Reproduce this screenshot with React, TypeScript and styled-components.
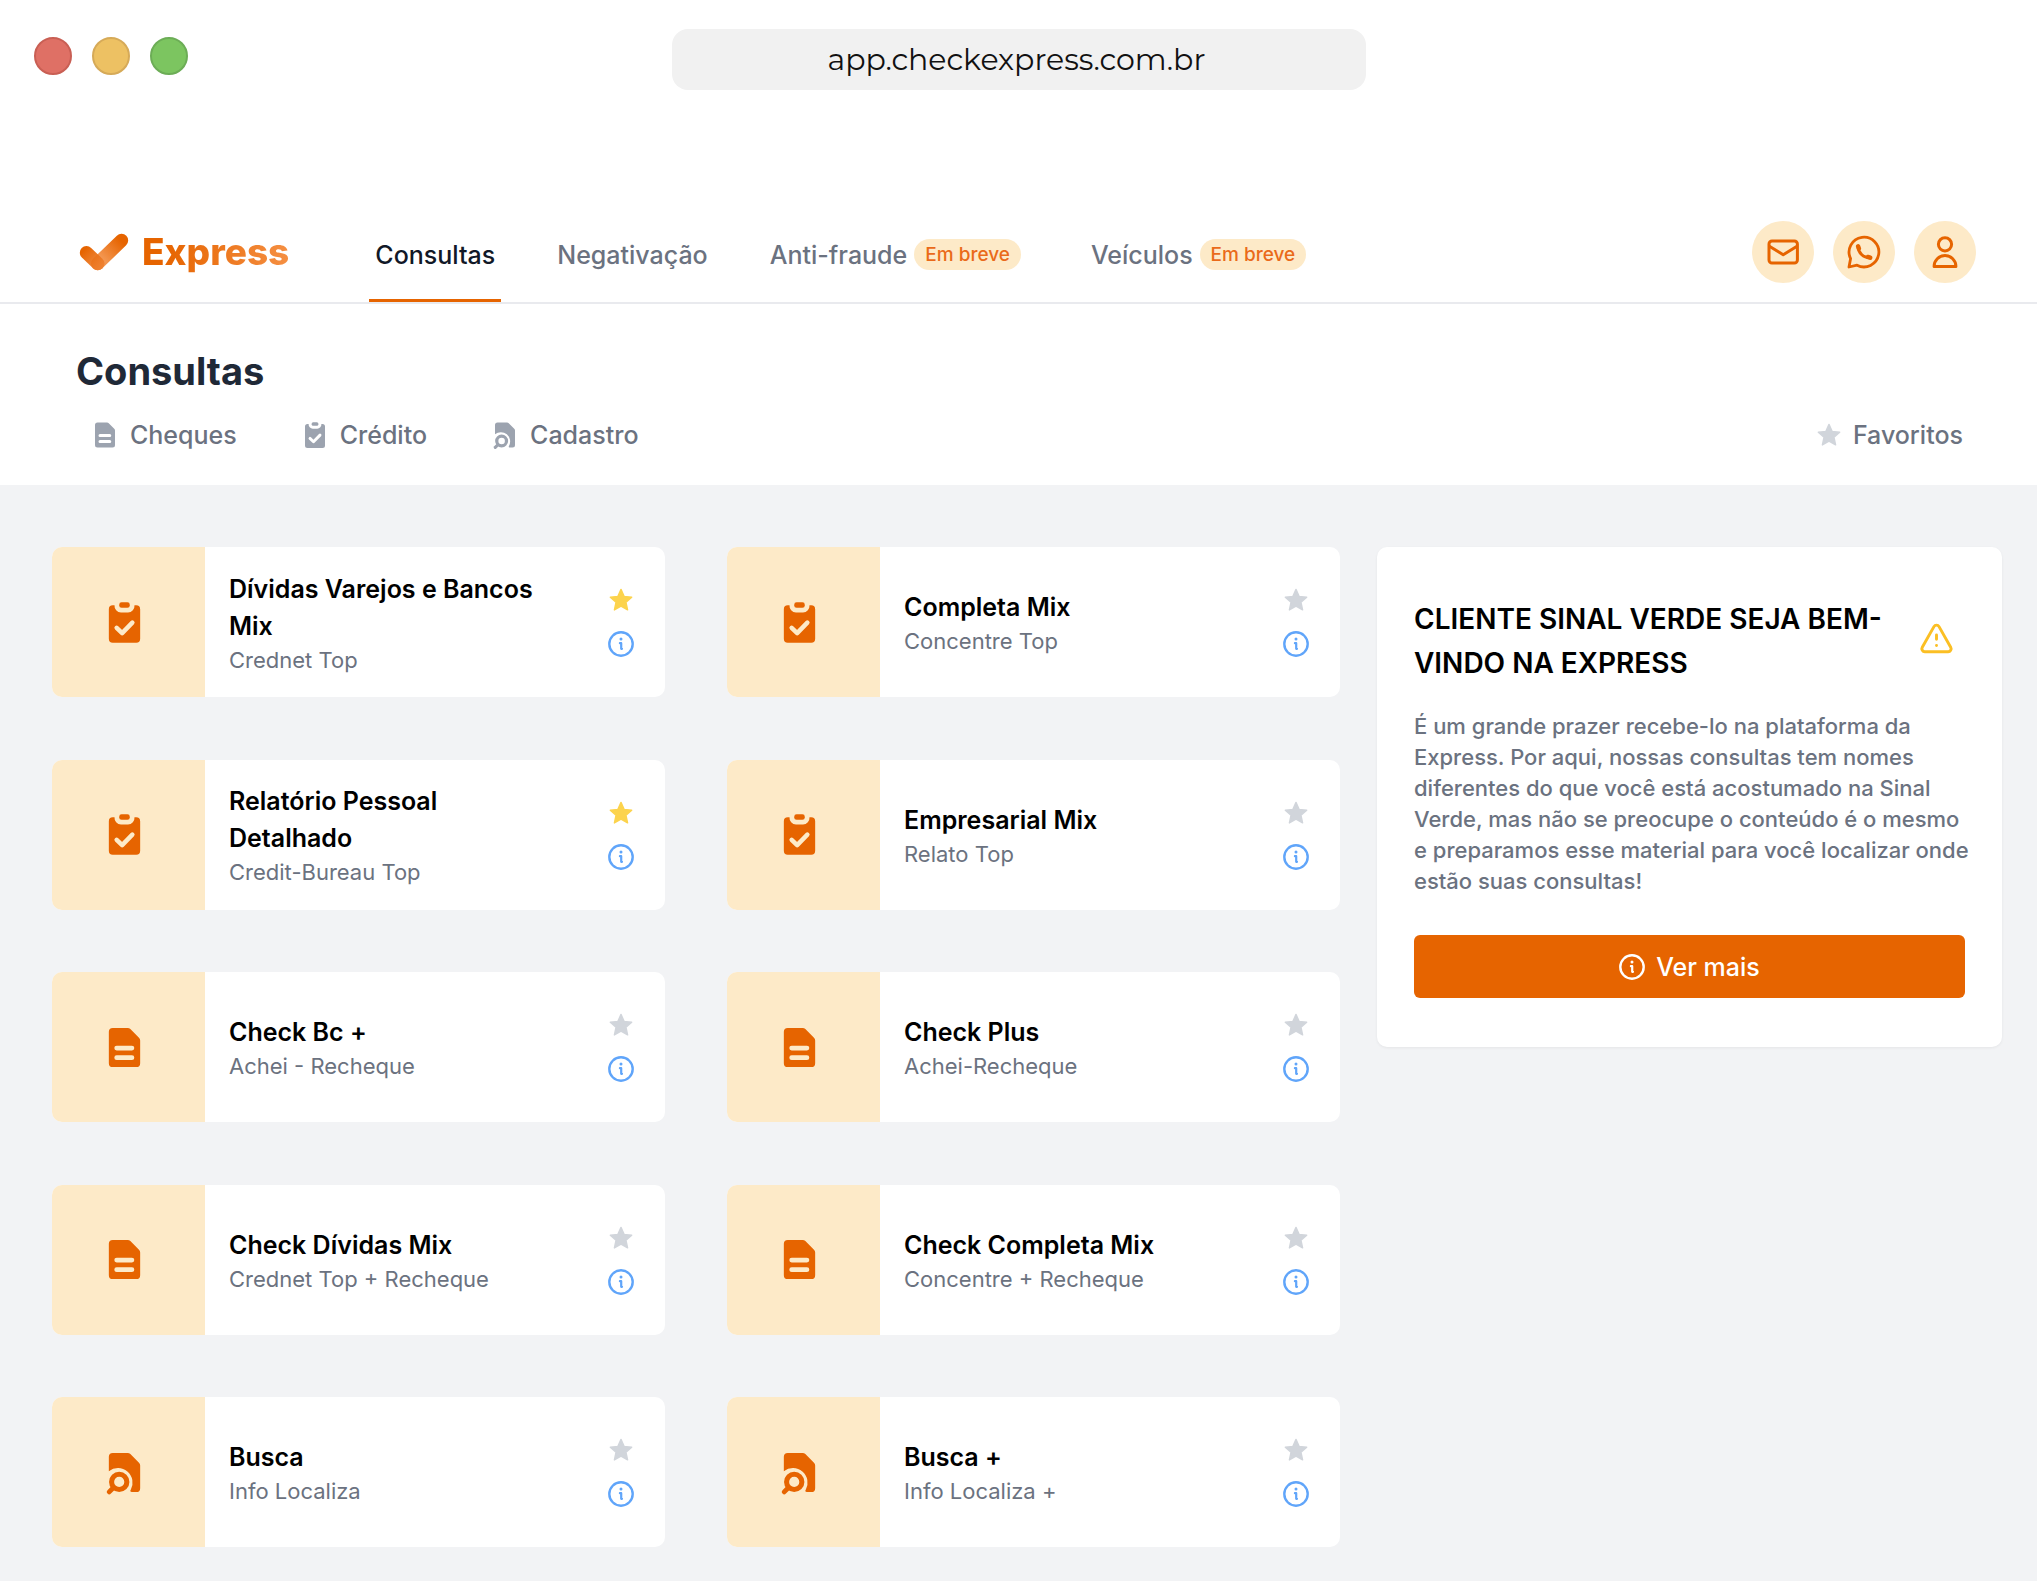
import React from "react";
import styled, { createGlobalStyle } from "styled-components";

const color = {
  brand: "#e66400",
  brandSoft: "#fdeac8",
  ink: "#000000",
  heading: "#1f2937",
  muted: "#6b7280",
  iconMuted: "#9ca3af",
  starOff: "#d1d5db",
  starOn: "#fcd34d",
  info: "#60a5fa",
  warning: "#fbbf24",
  canvas: "#f2f3f5",
  line: "#e9eaee",
  white: "#ffffff",
};

const GlobalStyle = createGlobalStyle`
  *, *::before, *::after { box-sizing: border-box; }
  body {
    margin: 0;
    background: ${color.white};
    font-family: Inter, "Liberation Sans", sans-serif;
  }
  h1, h2, h3, p { margin: 0; }
  a { color: inherit; text-decoration: none; }
  button {
    border: 0;
    padding: 0;
    background: none;
    font: inherit;
    color: inherit;
    cursor: pointer;
  }
  svg { display: block; flex-shrink: 0; }
`;

const Page = styled.div`
  min-height: 100vh;
  display: flex;
  flex-direction: column;
`;

/* Browser frame */

const Chrome = styled.div`
  display: grid;
  grid-template-columns: 1fr minmax(0, 694px) 1fr;
  align-items: start;
  padding: 29px 34px 112px;
`;

const Lights = styled.div`
  display: flex;
  gap: 20px;
  padding-top: 8px;
`;

const Light = styled.span<{ $fill: string; $edge: string }>`
  width: 38px;
  height: 38px;
  border-radius: 50%;
  background: ${(p) => p.$fill};
  border: 2px solid ${(p) => p.$edge};
`;

const AddressBar = styled.input`
  width: 100%;
  height: 61px;
  padding: 0 4px 0 0;
  border: 0;
  border-radius: 16px;
  background: #f1f1f1;
  color: #111111;
  font-family: Montserrat, Inter, sans-serif;
  font-size: 30px;
  text-align: center;
`;

/* Top navigation */

const Header = styled.header`
  display: flex;
  align-items: stretch;
  height: 102px;
  padding: 0 61px 0 78px;
  border-bottom: 2px solid ${color.line};
`;

const Logo = styled.a`
  display: flex;
  align-items: center;
  gap: 12px;
  margin-right: 80px;
`;

const LogoText = styled.span`
  font-size: 37px;
  line-height: 48px;
  font-weight: 800;
  color: transparent;
  background: linear-gradient(90deg, ${color.brand} 15%, #f58f42);
  background-clip: text;
  -webkit-background-clip: text;
`;

const Nav = styled.nav`
  display: flex;
  gap: 50px;
  flex: 1;
`;

const NavLink = styled.a<{ $active?: boolean }>`
  display: flex;
  align-items: center;
  gap: 7px;
  padding: 8px 6px 0;
  border-bottom: 3px solid ${(p) => (p.$active ? color.brand : "transparent")};
  color: ${(p) => (p.$active ? "#111827" : color.muted)};
  font-size: 25px;
  line-height: 38px;
  font-weight: 500;
`;

const Badge = styled.span`
  padding: 0 11px;
  margin-right: 8px;
  border-radius: 16px;
  background: ${color.brandSoft};
  color: #ea6a1a;
  font-size: 19px;
  line-height: 31px;
`;

const HeaderActions = styled.div`
  display: flex;
  align-items: center;
  gap: 19px;
`;

const RoundButton = styled.button`
  display: grid;
  place-items: center;
  width: 62px;
  height: 62px;
  border-radius: 50%;
  background: ${color.brandSoft};
  color: ${color.brand};
`;

/* Section header */

const SectionHead = styled.section`
  padding: 43px 74px 35px 76px;
`;

const PageTitle = styled.h1`
  color: ${color.heading};
  font-size: 38px;
  line-height: 48px;
  font-weight: 700;
`;

const Tabs = styled.div`
  display: flex;
  gap: 63px;
  margin-top: 25px;
  padding-left: 14px;
`;

const Tab = styled.button`
  display: flex;
  align-items: center;
  gap: 10px;
  color: ${color.muted};
  font-size: 25px;
  line-height: 30px;
  font-weight: 500;

  svg { color: ${color.iconMuted}; }
`;

const FavoritesTab = styled(Tab)`
  gap: 12px;
  margin-left: auto;

  svg { color: ${color.starOff}; }
`;

/* Content */

const Content = styled.main`
  flex: 1;
  display: grid;
  grid-template-columns: minmax(0, 1fr) 625px;
  gap: 37px;
  padding: 62px 35px 34px 52px;
  background: ${color.canvas};
`;

const Cards = styled.div`
  display: grid;
  grid-template-columns: repeat(2, minmax(0, 1fr));
  column-gap: 62px;
  row-gap: 48px;
  align-content: space-between;
`;

const Card = styled.article`
  display: flex;
  min-height: 150px;
  padding-right: 31px;
  border-radius: 10px;
  overflow: hidden;
  background: ${color.white};
`;

const CardIcon = styled.div`
  display: grid;
  place-items: center;
  width: 153px;
  padding-right: 8px;
  background: ${color.brandSoft};
  color: ${color.brand};
`;

const CardText = styled.div`
  flex: 1;
  align-self: center;
  padding: 2px 44px 0 24px;
`;

const CardTitle = styled.h2`
  color: ${color.ink};
  font-size: 25px;
  line-height: 37px;
  font-weight: 600;
`;

const CardSubtitle = styled.p`
  color: ${color.muted};
  font-size: 22px;
  line-height: 31px;
`;

const CardActions = styled.div`
  display: flex;
  flex-direction: column;
  justify-content: center;
  gap: 18px;
`;

const IconButton = styled.button<{ $tone: string }>`
  display: grid;
  place-items: center;
  width: 26px;
  height: 26px;
  color: ${(p) => p.$tone};
`;

const Notice = styled.aside`
  align-self: start;
  padding: 50px 37px 49px;
  border-radius: 10px;
  background: ${color.white};
  box-shadow: 0 1px 3px rgba(0, 0, 0, 0.06);
`;

const NoticeHead = styled.div`
  display: flex;
  align-items: center;
  justify-content: space-between;
  gap: 24px;
  padding-right: 11px;
  color: ${color.warning};
`;

const NoticeTitle = styled.h2`
  color: ${color.ink};
  font-size: 28px;
  line-height: 44px;
  font-weight: 600;
`;

const NoticeText = styled.p`
  margin: 26px -8px 38px 0;
  color: ${color.muted};
  font-size: 22px;
  line-height: 31px;
  font-weight: 500;
`;

const PrimaryButton = styled.button`
  display: flex;
  align-items: center;
  justify-content: center;
  gap: 11px;
  width: 100%;
  height: 63px;
  border-radius: 6px;
  background: ${color.brand};
  color: ${color.white};
  font-size: 25px;
  font-weight: 500;
`;

/* Icons */

type IconProps = { size: number; hole?: string };

const FileIcon = ({ size, hole = color.white }: IconProps) => (
  <svg width={size} height={size} viewBox="0 0 24 24" aria-hidden="true">
    <path
      fill="currentColor"
      d="M6 2h7.6a2 2 0 0 1 1.4.6l4.4 4.4a2 2 0 0 1 .6 1.4V20a2 2 0 0 1-2 2H6a2 2 0 0 1-2-2V4a2 2 0 0 1 2-2z"
    />
    <path stroke={hole} strokeWidth="2.4" strokeLinecap="round" d="M8 12.3h7.8M8 17.2h7.8" />
  </svg>
);

const ClipboardIcon = ({ size, hole = color.white }: IconProps) => (
  <svg width={size} height={size} viewBox="0 0 24 24" aria-hidden="true">
    <rect x="9.3" y="1.7" width="5.4" height="2.8" rx="1.2" fill="currentColor" />
    <path
      fill="currentColor"
      d="M6 3.2h.9a3.4 3.4 0 0 0 3.3 3.7h3.6a3.4 3.4 0 0 0 3.3-3.7h.9a2 2 0 0 1 2 2V20.3a2 2 0 0 1-2 2H6a2 2 0 0 1-2-2V5.2a2 2 0 0 1 2-2z"
    />
    <path
      fill="none"
      stroke={hole}
      strokeWidth="2.3"
      strokeLinecap="round"
      strokeLinejoin="round"
      d="M8 14.7l2.8 2.7 5.2-5.3"
    />
  </svg>
);

const FileSearchIcon = ({ size }: IconProps) => (
  <svg width={size} height={size} viewBox="0 0 24 24" aria-hidden="true" overflow="visible">
    <path
      fill="currentColor"
      d="M6 2h7.6a2 2 0 0 1 1.4.6l4.4 4.4a2 2 0 0 1 .6 1.4V20a2 2 0 0 1-2 2h-2.200c-.9 0-1-.7-.6-1.200A7.500 7.500 0 0 0 4 11.300V4a2 2 0 0 1 2-2z"
    />
    <g fill="none" stroke="currentColor" strokeLinecap="round">
      <circle cx="9.3" cy="16.8" r="3.9" strokeWidth="2.6" />
      <path strokeWidth="2.5" d="M6.300 19.800l-2.100 2.100" />
    </g>
  </svg>
);

const StarIcon = ({ size }: IconProps) => (
  <svg width={size} height={size} viewBox="0 0 24 24" aria-hidden="true">
    <path
      fill="currentColor"
      stroke="currentColor"
      strokeWidth="1.4"
      strokeLinejoin="round"
      d="M12 1.400l3.100 7 7.600.800-5.700 5.100 1.600 7.600L12 18.100l-6.600 3.800L7 14.300 1.300 9.200l7.600-.800z"
    />
  </svg>
);

const InfoIcon = ({ size }: IconProps) => (
  <svg width={size} height={size} viewBox="0 0 26 26" fill="none" aria-hidden="true">
    <circle cx="13" cy="13" r="11.7" stroke="currentColor" strokeWidth="2.4" />
    <circle cx="13" cy="8" r="1.500" fill="currentColor" />
    <path
      stroke="currentColor"
      strokeWidth="2.2"
      strokeLinecap="round"
      strokeLinejoin="round"
      d="M11.900 12.200h1.300v5.600h.8"
    />
  </svg>
);

const WarningIcon = () => (
  <svg
    width="35"
    height="35"
    viewBox="0 2 24 24"
    overflow="visible"
    fill="none"
    stroke="currentColor"
    strokeWidth="2"
    strokeLinecap="round"
    strokeLinejoin="round"
    aria-hidden="true"
  >
    <path d="M21.730 18l-8-14.200a2 2 0 0 0-3.480 0l-8 14.200A2 2 0 0 0 4 21h16a2 2 0 0 0 1.730-3" />
    <path d="M12 9.500v3M12 16.800h.01" />
  </svg>
);

const MailIcon = () => (
  <svg width="40" height="40" viewBox="0 0 40 40" fill="none" stroke="currentColor" strokeWidth="3" aria-hidden="true">
    <rect x="6" y="9" width="28.400" height="22" rx="3" />
    <path d="M6 14l14.200 8.700L34.400 14" strokeLinejoin="round" />
  </svg>
);

const WhatsappIcon = () => (
  <svg
    width="40"
    height="40"
    viewBox="0 0 40 40"
    fill="none"
    stroke="currentColor"
    strokeLinecap="round"
    strokeLinejoin="round"
    aria-hidden="true"
  >
    <path strokeWidth="2.8" d="M13 33.200A14.900 14.900 0 1 0 6.600 26.600L5 35z" />
    <path strokeWidth="3" d="M14 14.500c0 6 5.500 11.500 12 11.300" />
    <path strokeWidth="4.400" d="M14.100 14.200l.8 2.200M23.800 24.900l2.400.8" />
  </svg>
);

const UserIcon = () => (
  <svg width="40" height="40" viewBox="0 0 40 40" fill="none" stroke="currentColor" strokeWidth="3" aria-hidden="true">
    <circle cx="20" cy="12.300" r="6.600" />
    <path d="M9.100 34.400a10.900 10.800 0 0 1 21.800 0z" strokeLinejoin="round" />
  </svg>
);

const CheckLogo = () => (
  <svg width="52" height="40" viewBox="0 0 52 40" fill="none" strokeLinecap="round" strokeWidth="13.4" aria-hidden="true">
    <defs>
      <linearGradient id="long-stroke" gradientUnits="userSpaceOnUse" x1="48" y1="4" x2="15" y2="36">
        <stop offset="0.15" stopColor={color.brand} />
        <stop offset="0.7" stopColor="#f39650" />
        <stop offset="1" stopColor="#f08a3e" />
      </linearGradient>
      <linearGradient id="short-stroke" gradientUnits="userSpaceOnUse" x1="4" y1="16" x2="24" y2="36">
        <stop offset="0.1" stopColor={color.brand} />
        <stop offset="1" stopColor="#ee7f2e" stopOpacity="0.85" />
      </linearGradient>
    </defs>
    <path stroke="url(#long-stroke)" d="M19.700 31.500L43.500 8.500" />
    <path stroke="url(#short-stroke)" d="M8.500 20.700l11.200 10.800" />
  </svg>
);

const icons = {
  clipboard: ClipboardIcon,
  file: FileIcon,
  search: FileSearchIcon,
};

type Query = {
  title: string;
  subtitle: string;
  icon: keyof typeof icons;
  favorite?: boolean;
};

const queries: Query[] = [
  { title: "Dívidas Varejos e Bancos Mix", subtitle: "Crednet Top", icon: "clipboard", favorite: true },
  { title: "Completa Mix", subtitle: "Concentre Top", icon: "clipboard" },
  { title: "Relatório Pessoal Detalhado", subtitle: "Credit-Bureau Top", icon: "clipboard", favorite: true },
  { title: "Empresarial Mix", subtitle: "Relato Top", icon: "clipboard" },
  { title: "Check Bc +", subtitle: "Achei - Recheque", icon: "file" },
  { title: "Check Plus", subtitle: "Achei-Recheque", icon: "file" },
  { title: "Check Dívidas Mix", subtitle: "Crednet Top + Recheque", icon: "file" },
  { title: "Check Completa Mix", subtitle: "Concentre + Recheque", icon: "file" },
  { title: "Busca", subtitle: "Info Localiza", icon: "search" },
  { title: "Busca +", subtitle: "Info Localiza +", icon: "search" },
];

const QueryCard = ({ title, subtitle, icon, favorite }: Query) => {
  const Icon = icons[icon];
  return (
    <Card>
      <CardIcon>
        <Icon size={47} hole={color.brandSoft} />
      </CardIcon>
      <CardText>
        <CardTitle>{title}</CardTitle>
        <CardSubtitle>{subtitle}</CardSubtitle>
      </CardText>
      <CardActions>
        <IconButton type="button" aria-label="Favoritar" aria-pressed={!!favorite} $tone={favorite ? color.starOn : color.starOff}>
          <StarIcon size={24} />
        </IconButton>
        <IconButton type="button" aria-label="Informações" $tone={color.info}>
          <InfoIcon size={26} />
        </IconButton>
      </CardActions>
    </Card>
  );
};

export default function App() {
  return (
    <Page>
      <GlobalStyle />
      <Chrome>
        <Lights>
          <Light $fill="#df7065" $edge="#c95f54" />
          <Light $fill="#edc163" $edge="#d6aa58" />
          <Light $fill="#7cc560" $edge="#6cad56" />
        </Lights>
        <AddressBar type="text" aria-label="Endereço" readOnly value="app.checkexpress.com.br" />
      </Chrome>

      <Header>
        <Logo href="#">
          <CheckLogo />
          <LogoText>Express</LogoText>
        </Logo>
        <Nav>
          <NavLink href="#consultas" $active aria-current="page">Consultas</NavLink>
          <NavLink href="#negativacao">Negativação</NavLink>
          <NavLink href="#anti-fraude">
            Anti-fraude <Badge>Em breve</Badge>
          </NavLink>
          <NavLink href="#veiculos">
            Veículos <Badge>Em breve</Badge>
          </NavLink>
        </Nav>
        <HeaderActions>
          <RoundButton type="button" aria-label="E-mail"><MailIcon /></RoundButton>
          <RoundButton type="button" aria-label="WhatsApp"><WhatsappIcon /></RoundButton>
          <RoundButton type="button" aria-label="Perfil"><UserIcon /></RoundButton>
        </HeaderActions>
      </Header>

      <SectionHead>
        <PageTitle>Consultas</PageTitle>
        <Tabs>
          <Tab type="button"><FileIcon size={30} />Cheques</Tab>
          <Tab type="button"><ClipboardIcon size={30} />Crédito</Tab>
          <Tab type="button"><FileSearchIcon size={30} />Cadastro</Tab>
          <FavoritesTab type="button"><StarIcon size={24} />Favoritos</FavoritesTab>
        </Tabs>
      </SectionHead>

      <Content>
        <Cards>
          {queries.map((query) => (
            <QueryCard key={query.title} {...query} />
          ))}
        </Cards>
        <Notice>
          <NoticeHead>
            <NoticeTitle>CLIENTE SINAL VERDE SEJA BEM-VINDO NA EXPRESS</NoticeTitle>
            <WarningIcon />
          </NoticeHead>
          <NoticeText>
            É um grande prazer recebe-lo na plataforma da Express. Por aqui, nossas consultas tem nomes
            diferentes do que você está acostumado na Sinal Verde, mas não se preocupe o conteúdo é o mesmo e
            preparamos esse material para você localizar onde estão suas consultas!
          </NoticeText>
          <PrimaryButton type="button"><InfoIcon size={26} />Ver mais</PrimaryButton>
        </Notice>
      </Content>
    </Page>
  );
}
